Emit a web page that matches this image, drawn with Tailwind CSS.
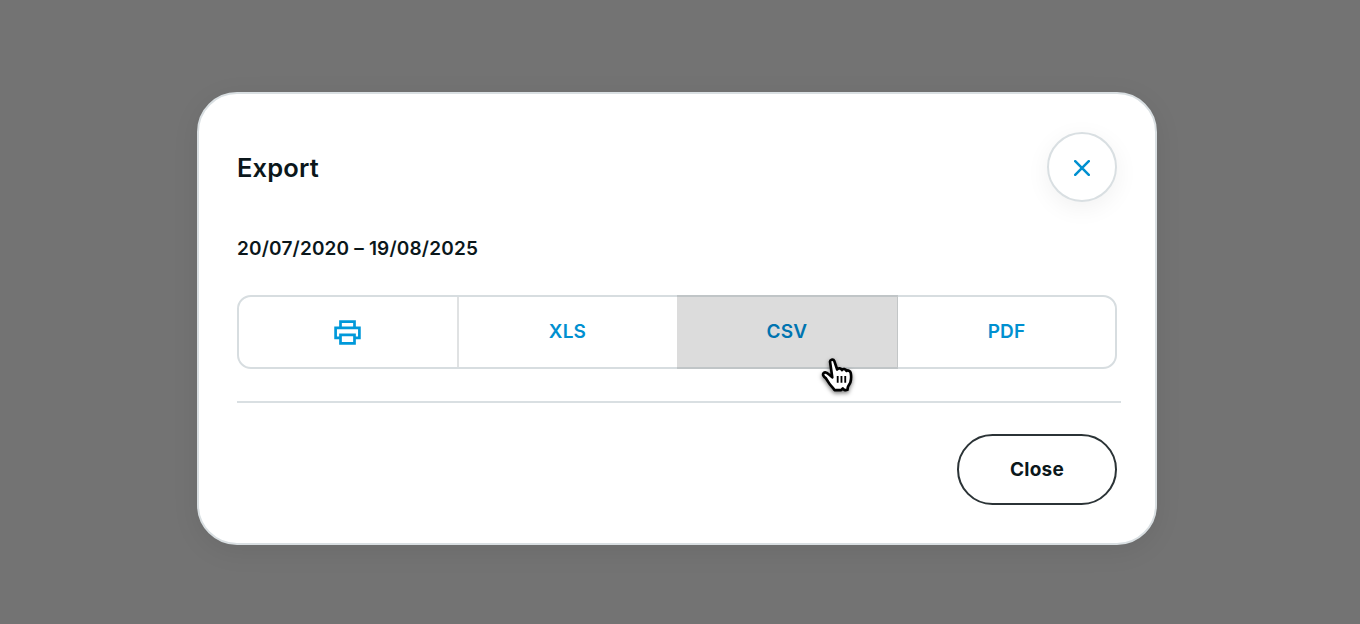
<!DOCTYPE html>
<html lang="en">
<head>
    <meta charset="UTF-8">
    <meta name="viewport" content="width=device-width, initial-scale=1.0">
    <title>Export</title>
    <script src="https://cdn.jsdelivr.net/npm/@tailwindcss/browser@4"></script>
</head>
<body class="relative h-screen overflow-hidden bg-[#737373] font-['Inter','Liberation_Sans',sans-serif] text-[#0b171b] antialiased">

    <div class="pt-[92px] pl-[197px]">
        <div role="dialog" aria-labelledby="dialog-title" class="w-[960px] h-[453px] bg-white rounded-[40px] border-2 border-[#d9dfe2] px-[38px] pt-[38px] shadow-[0_6px_28px_rgba(0,0,0,0.07)]">
            <header class="flex items-center justify-between w-[880px]">
                <h1 id="dialog-title" class="pt-0.5 text-[25.5px] leading-8 font-semibold tracking-[0.15px]">Export</h1>
                <button aria-label="Close dialog" class="flex items-center justify-center size-[70px] rounded-full border-2 border-[#d9dfe2] bg-white shadow-[0_6px_24px_rgba(0,0,0,0.06)]">
                    <svg class="size-4 translate-y-px" viewBox="0 0 16 16" fill="none" stroke="#0090d0" stroke-width="2.5" stroke-linecap="round">
                        <path d="M1.2 1.2l13.6 13.6M14.8 1.2L1.2 14.8"/>
                    </svg>
                </button>
            </header>

            <p class="mt-[33px] text-[19px] leading-7 font-semibold tracking-[0.17px]">20/07/2020 – 19/08/2025</p>

            <div class="mt-8 flex w-[880px] h-[74px] rounded-[14px] border-2 border-[#d7dde0] text-[19px] font-semibold tracking-[0.2px] text-[#0090d0]">
                <button aria-label="Print" class="flex items-center justify-center w-[220px] border-r-2 border-[#e0e2e3]">
                    <svg class="w-[27px] h-[25px] -translate-x-px" viewBox="0 0 27 25" fill="none" stroke="#0099da" stroke-width="2.7">
                        <path d="M6.5 7.8V1.6h14v6.2M6.5 17.8H1.6V7.8h23.8v10h-4.9M6.5 14.8h14v8.6h-14z"/>
                    </svg>
                </button>
                <button class="w-[218px] pr-px">XLS</button>
                <button class="-my-[2px] w-[221px] bg-[#dcdcdc] border-y-2 border-r border-y-[#c0c5c7] border-r-[#c3c6c7] text-[#0074b0]">CSV</button>
                <button class="flex-1">PDF</button>
            </div>

            <div class="mt-8 w-[884px] h-0.5 bg-[#d9dfe2]"></div>

            <div class="mt-[31px] flex justify-end w-[880px]">
                <button class="w-40 h-[71px] pt-px rounded-full border-2 border-[#2b3336] text-[19px] font-bold tracking-[0.2px]">Close</button>
            </div>
        </div>
    </div>

    <!-- pointer -->
    <svg class="absolute left-[815px] top-[350px] w-[46px] h-[51px] drop-shadow-[0_2px_2px_rgba(0,0,0,0.5)]" viewBox="0 0 45 50">
        <path d="M14.8 12.2c-.7-2.8 3-4 4.1-1.3l2.8 8.2c.9-1.8 4.3-1.4 4.6.6.9-1.7 4.1-1.2 4.5.9 1.2-1.2 3.8-.3 4.2 1.9.6 3.3.6 5.7-.3 9-.5 1.8-2.2 3.4-2.6 5.1l-.3 2.4c-1.3.5-2.3.4-3.4-.1l-1.2-1.2-1.6 1.6h-6.6c-1-2.4-3.6-4.1-5-6.3l-3.4-5.3c-2.6-1.6-3.4-3.8-2.2-5.1 1.6-1.4 4 .1 5.4 1.5l3.1 2.7-1-7z" fill="#fff" stroke="#000" stroke-width="2.6" stroke-linejoin="round"/>
        <path d="M22.2 25.5v6.7M25.9 25.5v6.7M29.6 25.5v6.7" stroke="#000" stroke-width="1.8"/>
    </svg>
</body>
</html>
